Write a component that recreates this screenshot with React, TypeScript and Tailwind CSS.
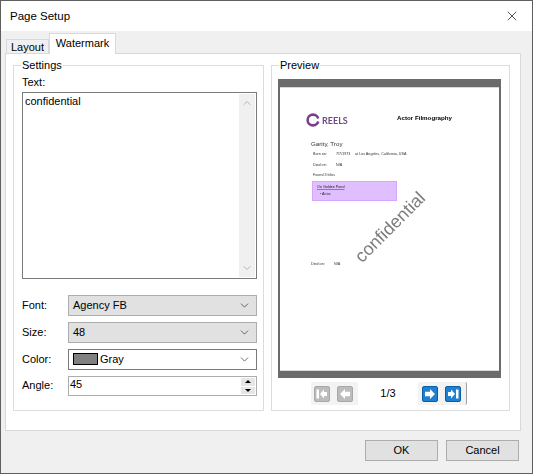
import React from "react";
import { ChevronDown, X } from "lucide-react";

const ui = "font-['Liberation_Sans',sans-serif] text-[11px] leading-none text-black";

function Select({ gray, children }: { gray?: boolean; children: React.ReactNode }) {
  return (
    <div
      className={`flex h-[21px] w-[189px] items-center justify-between pl-[4px] pr-[5px] border ${
        gray ? "bg-[#e1e1e1] border-[#adadad]" : "bg-white border-[#7a7a7a]"
      }`}
    >
      <div className="flex items-center gap-[2px] pb-[1px]">{children}</div>
      <ChevronDown size={13} strokeWidth={1.2} className="text-[#222]" />
    </div>
  );
}

function FormRow({ label, children }: { label: string; children: React.ReactNode }) {
  return (
    <div className="flex items-center">
      <span className="w-[46px] pb-[1px]">{label}</span>
      {children}
    </div>
  );
}

function GroupBox({ title, className, children }: { title: string; className: string; children: React.ReactNode }) {
  return (
    <div className={`relative h-[346px] border border-[#dcdcdc] ${className}`}>
      <span className="absolute left-[7px] -top-[8px] bg-white px-[1px] leading-[14px]">{title}</span>
      {children}
    </div>
  );
}

function PagerButton({ active, last, first, next }: { active?: boolean; last?: boolean; first?: boolean; next?: boolean }) {
  const fill = "#fff";
  return (
    <div
      className={`flex h-[16px] w-[16px] items-center justify-center rounded-[2px] border ${
        active ? "bg-[#1f80d2] border-[#0b5da6]" : "bg-[#bcbcbc] border-[#a8a8a8]"
      }`}
    >
      <svg width="14" height="14" viewBox="0 0 14 14">
        {first && <rect x="1.5" y="2.5" width="2.5" height="9" fill={fill} />}
        {first && <path d="M5 7 9 2.5V5H12V9H9V11.5Z" fill={fill} />}
        {!first && !next && !last && <path d="M2 7 7 2V4.8H12V9.2H7V12Z" fill={fill} />}
        {next && <path d="M12 7 7 2V4.8H2V9.2H7V12Z" fill={fill} />}
        {last && <path d="M9 7 5 2.5V5H2V9H5V11.5Z" fill={fill} />}
        {last && <rect x="10" y="2.5" width="2.5" height="9" fill={fill} />}
      </svg>
    </div>
  );
}

function PreviewPage() {
  return (
    <div className="relative flex h-[299px] w-[223px] flex-col bg-[#6b6b6b] pt-[8px] px-[2px]">
      <div className="relative h-[284px] w-full overflow-hidden border-t border-b border-[#d8d8d8] bg-white text-[#333] blur-[0.35px]">
        <div className="flex h-[14px] mt-[25px] ml-[26px] items-center">
          <svg width="14" height="14" viewBox="0 0 14 14">
            <circle cx="7" cy="7" r="5.4" fill="none" stroke="#7b3f8c" strokeWidth="2.6" />
            <path d="M10 6.2 14 5V9L10 7.8Z" fill="#fff" />
          </svg>
          <span className="ml-[2px] w-[75px] font-['Lato',sans-serif] text-[9px] font-bold text-[#6f4a80]">REELS</span>
          <span className="-mt-[4px] text-[6.2px] font-bold text-black">Actor Filmography</span>
        </div>
        <p className="mt-[13px] ml-[31px] text-[6.2px] leading-[8px]">Garity, Troy</p>
        <div className="mt-[3px] ml-[33px] flex text-[3.7px] leading-[6px]">
          <span className="w-[23px]">Born on:</span>
          <span className="w-[19px]">7/7/1973</span>
          <span>at Los Angeles, California, USA</span>
        </div>
        <div className="mt-[5px] ml-[33px] flex text-[3.7px] leading-[6px]">
          <span className="w-[23px]">Died on:</span>
          <span>N/A</span>
        </div>
        <p className="mt-[4px] ml-[33px] text-[3.7px] leading-[6px]">Found 3 titles</p>
        <div className="mt-[3px] ml-[32px] h-[20px] w-[85px] border border-[#d9a6ff] bg-[#dfbfff] pl-[4px] pt-[2px] text-[3.7px] leading-[6px] text-[#222]">
          <p className="underline decoration-[#8a7a99]">On Golden Pond</p>
          <p className="ml-[3px] mt-[1px]">• Actor</p>
        </div>
        <div className="mt-[60px] ml-[31px] flex text-[3.7px] leading-[6px]">
          <span className="w-[23px]">Died on:</span>
          <span>N/A</span>
        </div>
        <span className="absolute left-[110px] top-[139px] -translate-x-1/2 -translate-y-1/2 -rotate-45 text-[18px] leading-none text-[#7d7d7d]">
          confidential
        </span>
      </div>
    </div>
  );
}

export default function App() {
  return (
    <div className={`${ui} flex h-[474px] w-[533px] flex-col border border-[#5f5f5f] bg-[#f0f0f0]`}>
      <div className="flex h-[30px] shrink-0 items-center justify-between bg-white pl-[9px] pr-[12px]">
        <span className="pt-[1px] text-[11.5px]">Page Setup</span>
        <X size={16} strokeWidth={1} />
      </div>

      <div className="mt-[1px] flex h-[21px] items-end pl-[5px]">
        <div className="flex h-[15px] w-[43px] items-center justify-center border border-b-0 border-[#d9d9d9] bg-[#f0f0f0] -mb-px">Layout</div>
        <div className="relative z-10 flex h-[21px] w-[67px] items-center justify-center border border-b-0 border-[#d9d9d9] bg-white -mb-px pb-[2px]">Watermark</div>
      </div>

      <div className="ml-[4px] flex h-[378px] w-[516px] gap-[7px] border border-[#d9d9d9] bg-white pl-[7px] pt-[11px]">
        <GroupBox title="Settings" className="w-[251px] pl-[8px]">
          <p className="mt-[9px] h-[17px] leading-[14px]">Text:</p>
          <div className="flex h-[187px] w-[235px] justify-between border border-[#7a7a7a] p-[1px]">
            <span className="pl-[1px] leading-[14px]">confidential</span>
            <div className="flex w-[16px] flex-col items-center justify-between bg-[#f0f0f0] py-[3px] text-[#b5b5b5]">
              <ChevronDown size={12} strokeWidth={2} className="rotate-180" />
              <ChevronDown size={12} strokeWidth={2} />
            </div>
          </div>
          <div className="mt-[16px] flex flex-col gap-[6px]">
            <FormRow label="Font:">
              <Select gray>Agency FB</Select>
            </FormRow>
            <FormRow label="Size:">
              <Select gray>48</Select>
            </FormRow>
            <FormRow label="Color:">
              <Select>
                <span className="h-[12px] w-[25px] border border-black bg-[#808080]" />
                <span>Gray</span>
              </Select>
            </FormRow>
            <FormRow label="Angle:">
              <div className="flex h-[20px] w-[189px] items-center justify-between border border-[#adadad] bg-white pl-[1px] pr-[1px]">
                <span className="pb-[3px]">45</span>
                <div className="flex h-[16px] w-[14px] flex-col gap-[1px]">
                  <div className="flex h-[8px] items-center justify-center bg-[#e6e6e6]">
                    <span className="h-0 w-0 border-x-[3px] border-b-[3px] border-x-transparent border-b-black" />
                  </div>
                  <div className="flex h-[8px] items-center justify-center bg-[#e6e6e6]">
                    <span className="h-0 w-0 border-x-[3px] border-t-[3px] border-x-transparent border-t-black" />
                  </div>
                </div>
              </div>
            </FormRow>
          </div>
        </GroupBox>

        <GroupBox title="Preview" className="w-[239px] pl-[6px] pt-[13px]">
          <PreviewPage />
          <div className="mt-[4px] ml-[33px] flex h-[23px] w-[156px] items-center rounded-[2px] border-r border-r-[#a0a0a0] bg-[#f3f3f3] pl-[3px]">
            <PagerButton first />
            <span className="w-[7px]" />
            <PagerButton />
            <span className="ml-[5px] flex h-[23px] w-[60px] items-center justify-center bg-white pb-[1px]">1/3</span>
            <span className="w-[4px]" />
            <PagerButton active next />
            <span className="w-[7px]" />
            <PagerButton active last />
          </div>
        </GroupBox>
      </div>

      <div className="mt-[9px] flex justify-end gap-[8px] pr-[13px]">
        <button className="flex h-[21px] w-[73px] items-center justify-center border border-[#adadad] bg-[#e1e1e1]">OK</button>
        <button className="flex h-[21px] w-[73px] items-center justify-center border border-[#adadad] bg-[#e1e1e1]">Cancel</button>
      </div>
    </div>
  );
}
